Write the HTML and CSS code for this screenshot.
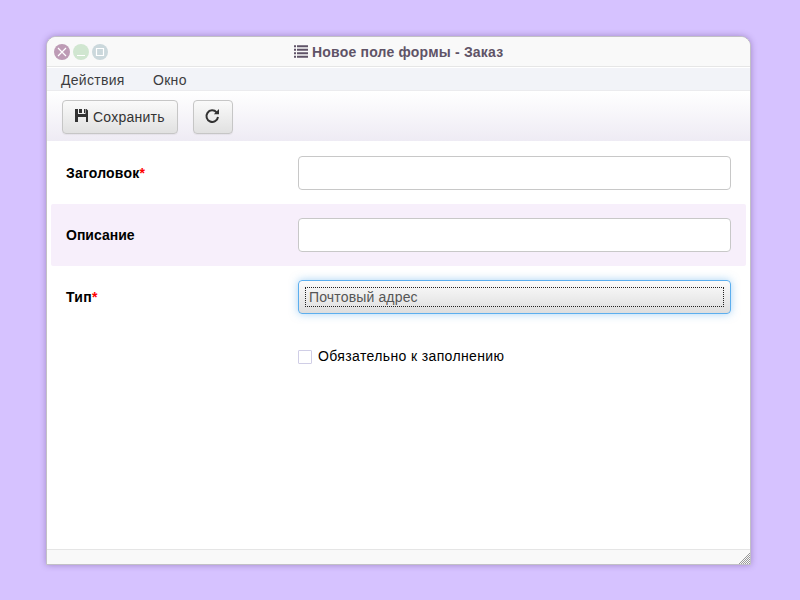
FILE: index.html
```html
<!DOCTYPE html>
<html lang="ru">
<head>
<meta charset="utf-8">
<title>Новое поле формы - Заказ</title>
<link rel="stylesheet" href="styles.css">
</head>
<body>
<div class="window">
  <header class="titlebar">
    <div class="controls">
      <span class="control close"><svg viewBox="0 0 16 16"><path d="M4 4l8 8M12 4l-8 8"/></svg></span>
      <span class="control minimize"><svg viewBox="0 0 16 16"><path d="M4 11.5h8"/></svg></span>
      <span class="control maximize"><svg viewBox="0 0 16 16"><path d="M4.5 4.5h7v7h-7z"/></svg></span>
    </div>
    <h1 class="title">
      <svg class="list-icon" viewBox="0 0 14 13"><path d="M0 .3h2v2H0zM3 .3h11v2H3zM0 3.7h2v2H0zM3 3.7h11v2H3zM0 7.2h2v2H0zM3 7.2h11v2H3zM0 10.7h2v2H0zM3 10.7h11v2H3z"/></svg>
      <span class="title-text">Новое поле формы - Заказ</span>
    </h1>
  </header>
  <nav class="menu"><span class="menu-actions">Действия</span><span class="menu-window">Окно</span></nav>
  <div class="toolbar">
    <button class="button save">
      <svg class="save-icon" viewBox="0 0 14 14"><path d="M0 0h3v5h7.5V0h1L13 1.5V13h-2V8H3v5H0zM4 0h3v4H4zM9 0h1v4H9z"/></svg>
      <span class="save-text">Сохранить</span>
    </button>
    <button class="button refresh" aria-label="Обновить"><svg viewBox="0 0 16 16"><path class="arc" d="M12.6 4.3A5.8 5.8 0 1 0 14 9"/><path class="head" d="M15 1v5.2H9.8z"/></svg></button>
  </div>
  <main class="form">
    <div class="row"><label class="label" for="caption"><span class="l-caption">Заголовок</span><b>*</b></label><input class="field" id="caption" type="text"></div>
    <div class="row tinted"><label class="label" for="description"><span class="l-desc">Описание</span></label><input class="field" id="description" type="text"></div>
    <div class="row"><span class="label"><span class="l-type">Тип</span><b>*</b></span><div class="field select"><div class="focus"><span>Почтовый адрес</span></div></div></div>
    <div class="row check-row"><label class="check"><span class="box"></span><span class="check-text">Обязательно к заполнению</span></label></div>
  </main>
  <footer class="status"><svg class="grip" viewBox="0 0 12 12"><defs><pattern id="dots" width="2" height="2" patternUnits="userSpaceOnUse"><path d="M0 0h1v1H0zM1 1h1v1H1z" fill="#999"/></pattern></defs><path d="M12 0v12H0z" fill="url(#dots)" shape-rendering="crispEdges"/></svg></footer>
</div>
</body>
</html>
```

FILE: styles.css
```css
* { box-sizing: border-box; }
body {
  margin: 0;
  height: 600px;
  padding: 36px 49px 0 46px;
  overflow: hidden;
  background: #d6c2ff;
  font: 14px/20px "Liberation Sans", Arial, sans-serif;
  color: #000;
}
.window {
  display: flex;
  flex-direction: column;
  width: 705px;
  height: 529px;
  border: 1px solid #c2c0c6;
  border-radius: 10px 10px 0 0;
  background: #fff;
  box-shadow: 0 0 6px rgba(80, 50, 120, .4);
  overflow: hidden;
}
.titlebar {
  display: grid;
  grid-template-columns: 247px 1fr;
  height: 30px;
  border-bottom: 1px solid #e6e6e6;
  background: #f9f9f9;
}
.controls { display: flex; gap: 3px; padding: 7px 0 0 7px; }
.control { width: 16px; height: 16px; border-radius: 50%; }
.control svg { display: block; width: 16px; height: 16px; fill: none; stroke: #fff; stroke-width: 1.2; }
.close { background: #bd9bb5; }
.minimize { background: #d0e6d0; }
.maximize { background: #cbd8dc; }
.title { display: flex; gap: 4px; margin: 0; padding-top: 5px; font-size: 14px; color: #5f5367; white-space: nowrap; }
.list-icon { width: 14px; height: 13px; margin-top: 3px; fill: currentColor; }
.title-text { letter-spacing: .2px; }
.menu { display: flex; height: 24px; padding: 2px 0 0 14px; border-top: 1px solid #fff; border-bottom: 1px solid #ebebee; background: #f2f3f8; color: #3c3c40; }
.menu-actions { width: 92px; letter-spacing: .3px; }
.menu-window { letter-spacing: .3px; }
.toolbar {
  display: flex;
  gap: 15px;
  height: 50px;
  padding: 9px 0 0 15px;
  background: linear-gradient(#fff, #eeebf4);
}
.button {
  display: flex;
  align-items: center;
  height: 34px;
  padding: 0 12px;
  border: 1px solid #c6c6c6;
  border-radius: 4px;
  background: linear-gradient(#fafafa, #e1e1e1);
  box-shadow: 0 1px 1px rgba(0, 0, 0, .05);
  font: inherit;
  color: #333;
  white-space: nowrap;
}
.save { width: 116px; gap: 4px; }
.save-text { letter-spacing: .25px; }
.save-icon { flex: none; width: 14px; height: 14px; margin-top: -2px; fill: #333; }
.refresh { width: 40px; }
.refresh svg { flex: none; width: 16px; height: 16px; margin-left: -2px; margin-top: -2px; }
.arc { fill: none; stroke: #333; stroke-width: 2; }
.head { fill: #333; }
.form { flex: 1; padding: 1px 4px 0; }
.row { display: grid; grid-template-columns: 247px 433px; height: 62px; padding-top: 14px; }
.tinted { border-radius: 2px; background: #f7effb; }
.label { padding: 7px 0 0 15px; font-weight: bold; }
.label b { color: #f00; font-weight: bold; }
.l-caption { letter-spacing: .2px; }
.l-type { letter-spacing: .3px; }
.field { width: 433px; height: 34px; border: 1px solid #c8c8c8; border-radius: 4px; background: #fff; }
.select { padding: 6px; border-color: #5caeee; background: linear-gradient(#fbfbfb, #dedede); box-shadow: 0 0 8px rgba(82, 168, 236, .5); color: #555; }
.focus { height: 20px; border: 1px dotted #222; padding-left: 3px; line-height: 18px; letter-spacing: .15px; }
.check-row { padding: 18px 0 0; }
.check { grid-column: 2; display: flex; gap: 6px; }
.check-text { letter-spacing: .37px; }
.box { width: 14px; height: 14px; margin-top: 4px; border: 1px solid #d0cee6; border-radius: 1px; background: #fff; }
.status { display: flex; justify-content: flex-end; align-items: flex-end; height: 15px; border-top: 1px solid #e5e5e5; background: #f9f9f9; }
.grip { width: 12px; height: 12px; }
```
